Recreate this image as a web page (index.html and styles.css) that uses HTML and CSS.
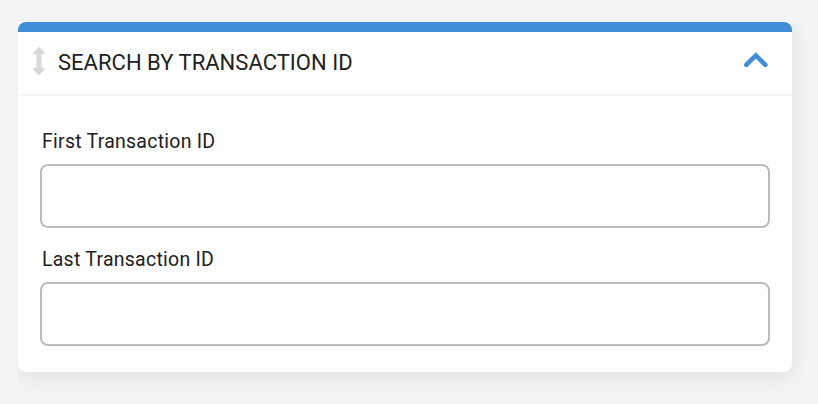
FILE: index.html
```html
<!DOCTYPE html>
<html lang="en">
<head>
<meta charset="utf-8">
<title>Search</title>
<link rel="stylesheet" href="styles.css">
</head>
<body>
<section class="card">
  <div class="accent"></div>
  <header class="card-header">
    <svg class="drag" width="14" height="28" viewBox="0 0 14 28"><path d="M7 .8 12 5.800V6.400H8.800V21.600H12V22.200L7 27.200 2 22.200V21.600H5.200V6.400H2V5.800Z"/></svg>
    <h2 class="title">SEARCH BY TRANSACTION ID</h2>
    <svg class="chevron" width="26" height="16" viewBox="0 0 26 16"><path d="M3.300 12.900 12.800 3.400 22.300 12.900"/></svg>
  </header>
  <form class="card-body">
    <label class="label" for="first">First Transaction ID</label>
    <input class="input" id="first" type="text">
    <label class="label" for="last">Last Transaction ID</label>
    <input class="input" id="last" type="text">
  </form>
</section>
</body>
</html>
```
FILE: styles.css
```css
* { box-sizing: border-box; }
body {
  margin: 0;
  padding: 22px 26px 32px 18px;
  background: #f1f3f5;
  color: #212121;
  font-family: Roboto, sans-serif;
}
.card {
  height: 350px;
  border-radius: 0 0 8px 8px;
  background: #fff;
  box-shadow: 0 4px 20px rgba(0, 0, 0, .08);
  clip-path: inset(0 -26px -32px 0);
}
.accent {
  height: 10px;
  border-radius: 8px 8px 0 0;
  background: #418cd6;
}
.card-header {
  display: flex;
  align-items: center;
  height: 64px;
  padding: 0 23px 0 14px;
  border-bottom: 2px solid #f4f4f4;
}
.drag {
  margin-bottom: 4px;
  fill: #d8d8d8;
  stroke: #d8d8d8;
  stroke-width: 1.500;
  stroke-linejoin: round;
  overflow: visible;
}
.title {
  flex: 1;
  margin: 0 0 0 12px;
  font-size: 22px;
  font-weight: 400;
  line-height: 28px;
  letter-spacing: .02px;
}
.chevron {
  margin-bottom: 6px;
  fill: none;
  stroke: #418cd6;
  stroke-width: 4.600;
  stroke-linecap: round;
}
.card-body { padding: 32px 22px 0; }
.label {
  display: block;
  height: 36px;
  padding: 1px 0 0 2px;
  font-size: 19.500px;
  line-height: 26px;
  letter-spacing: .25px;
}
.input {
  display: block;
  width: 100%;
  height: 64px;
  margin: 0 0 18px;
  padding: 0 16px;
  border: 2px solid #bbb;
  border-radius: 8px;
  background: #fff;
  font: inherit;
}
```
